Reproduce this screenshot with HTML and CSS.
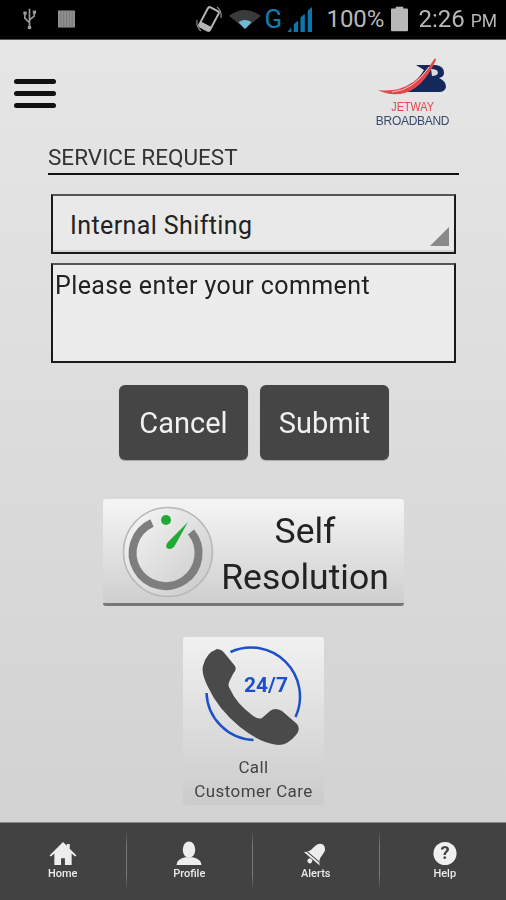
FILE: index.html
```html
<!DOCTYPE html>
<html lang="en">
<head>
<meta charset="utf-8">
<title>Service Request</title>
<link rel="stylesheet" href="styles.css">
</head>
<body>
<div class="screen">
  <div class="status">
    <div class="status-left">
      <svg class="ic-usb" viewBox="0 0 16 24"><path d="M8 1v20M8 16L3 11V7M8 13l5-4V6" fill="none" stroke="#9a9a9a" stroke-width="1.8"/><circle cx="8" cy="21" r="2" fill="#9a9a9a"/><rect x="1.5" y="4" width="3.5" height="3.5" fill="#9a9a9a"/><rect x="11.5" y="3" width="3.5" height="3.5" fill="#9a9a9a"/></svg>
      <svg class="ic-bars" viewBox="0 0 18 18"><rect width="18" height="18" fill="#8f8f8f"/><path d="M3 0v18M6 0v18M9 0v18M12 0v18M15 0v18" stroke="#777" stroke-width="1"/></svg>
    </div>
    <div class="status-right">
      <svg class="ic-rotate" viewBox="0 0 26 28"><g transform="rotate(28 13 14)"><rect x="7" y="3" width="12" height="22" rx="2" fill="none" stroke="#b5b5b5" stroke-width="2"/><rect x="7" y="20" width="12" height="5" fill="#b5b5b5"/></g><path d="M1 15Q0 22 5 26M25 13Q26 6 21 2" fill="none" stroke="#8a8a8a" stroke-width="1.200"/></svg>
      <svg class="ic-wifi" viewBox="0 0 34 20"><path d="M0 6Q17-6 34 6L17 20Z" fill="#3a3a3a"/><path d="M10 13Q17 8 24 13L17 20Z" fill="#6fb8d8"/></svg>
      <span class="net">G</span>
      <svg class="ic-signal" viewBox="0 0 26 26"><path d="M0 26L4 21V26Z" fill="#0b78ad"/><path d="M6.500 26V18L11 14V26Z" fill="#0b78ad"/><path d="M13.500 26V11L18 7V26Z" fill="#0b78ad"/><path d="M21 26V4L25.500 0V26Z" fill="#0b78ad"/></svg>
      <span class="pct">100%</span>
      <svg class="ic-batt" viewBox="0 0 18 26"><rect x="5" width="8" height="3" fill="#b8b8b8"/><rect y="2" width="18" height="24" rx="1" fill="#b8b8b8"/></svg>
      <span class="clock">2:26<small>PM</small></span>
    </div>
  </div>

  <main class="main">
    <header class="top">
      <div class="burger"><i></i><i></i><i></i></div>
      <div class="logo">
        <svg class="logo-mark" viewBox="0 0 74 42"><path d="M40 8H60Q68 9 68 16Q68 20 63 21Q70 24 70 30Q69 35 63 35H18Q38 30 48 13Z" fill="#14285c"/><path d="M55 12Q62 12 62 16Q61 19 56 19Z" fill="#dcdcdc"/><path d="M2 33Q36 38 59 1L60 3Q46 34 24 37Q10 38 2 33Z" fill="#e2474b"/><path d="M16 35Q38 33 53 10" fill="none" stroke="#f3c4c4" stroke-width="1"/></svg>
        <div class="logo-red">JETWAY</div>
        <div class="logo-blue">BROADBAND</div>
      </div>
    </header>

    <h1 class="title">SERVICE REQUEST</h1>

    <div class="field select">Internal Shifting<span class="caret"></span></div>
    <div class="field comment">Please enter your comment</div>

    <div class="actions">
      <button class="btn">Cancel</button>
      <button class="btn">Submit</button>
    </div>

    <div class="self">
      <svg class="gauge" viewBox="0 0 92 92">
        <defs><linearGradient id="g1" x1="0" y1="0" x2="1" y2="1"><stop offset="0" stop-color="#f8f8f8"/><stop offset="1" stop-color="#c8c8c8"/></linearGradient></defs>
        <circle cx="46" cy="46" r="44.500" fill="url(#g1)" stroke="#b8b8b8" stroke-width="1.500"/>
        <path d="M30 17A33 33 0 1 0 69 26" fill="none" stroke="#7e7e7e" stroke-width="8"/>
        <circle cx="44" cy="14" r="5" fill="#1faa35"/>
        <path d="M66 16L52 41Q47 45 44 41Q44 38 46 36Z" fill="#1faa35"/>
      </svg>
      <div class="self-label">Self<br>Resolution</div>
    </div>

    <div class="care">
      <svg class="phone" viewBox="0 0 106 106">
        <path d="M30.500 9A49 49 0 0 1 95.500 74M6.500 50A49 49 0 0 0 53.500 97" fill="none" stroke="#1c50c8" stroke-width="2.500"/>
        <path d="M17 6Q22 6 26 12L35 23Q37 27 33 31L30 37Q27 42 30 46Q36 60 52 72Q58 77 62 75L70 68Q75 64 82 68L97 81Q101 86 96 92Q88 102 78 102Q60 100 40 84Q18 66 8 44Q1 30 3 23Q6 10 17 6Z" fill="#4a4a4a"/>
        <text x="66" y="49" class="phone-txt" text-anchor="middle">24/7</text>
      </svg>
      <div class="care-label">Call<br>Customer Care</div>
    </div>
  </main>

  <nav class="tabs">
    <div class="tab">
      <svg class="tab-ic" viewBox="0 0 28 26"><path d="M14 1L0 15l1.500 1L5 13v12h7v-7h4v7h7V13l3.500 3 1.500-1L21 8V3h-3v2Z" fill="#ededed"/></svg>
      <span>Home</span>
    </div>
    <div class="tab">
      <svg class="tab-ic" viewBox="0 0 28 26"><ellipse cx="14" cy="9" rx="6.500" ry="8.500" fill="#ededed"/><path d="M1 25Q1 19 10 17H18Q27 19 27 25Z" fill="#ededed"/></svg>
      <span>Profile</span>
    </div>
    <div class="tab">
      <svg class="tab-ic" viewBox="0 0 28 26"><g transform="rotate(40 14 13)"><path d="M14 1Q20 2 20 10Q20 17 25 20H3Q8 17 8 10Q8 2 14 1Z" fill="#ededed"/><path d="M6 17.500H22" stroke="#424242" stroke-width="1"/><circle cx="14" cy="23" r="2.500" fill="#ededed"/></g></svg>
      <span>Alerts</span>
    </div>
    <div class="tab">
      <svg class="tab-ic" viewBox="0 0 28 26"><circle cx="14" cy="13" r="12" fill="#f0f0f0"/><text x="14" y="19" class="q" text-anchor="middle">?</text></svg>
      <span>Help</span>
    </div>
  </nav>
</div>
</body>
</html>
```

FILE: styles.css
```css
* { box-sizing: border-box; }
html, body { margin: 0; padding: 0; }
body { font-family: Roboto, "Liberation Sans", sans-serif; background: #000; }
.screen { width: 506px; height: 900px; display: flex; flex-direction: column; overflow: hidden; filter: blur(.5px); }

.status { height: 40px; flex: none; background: #000; border-bottom: 1px solid #555; display: flex; justify-content: space-between; align-items: center; padding: 0 9px 1px 22px; color: #b8b8b8; }
.status-left { display: flex; align-items: center; gap: 21px; }
.ic-usb { width: 15px; height: 24px; }
.ic-bars { width: 17px; height: 18px; }
.status-right { display: flex; align-items: center; }
.ic-rotate { width: 26px; height: 28px; margin-right: 7px; }
.ic-wifi { width: 32px; height: 19px; margin-right: 3px; }
.net { color: #0d7fb5; font-size: 26px; width: 20px; margin-right: 3px; }
.ic-signal { width: 26px; height: 25px; margin-right: 13px; }
.pct { font-size: 24px; width: 58px; margin-right: 7px; }
.ic-batt { width: 17px; height: 26px; margin-right: 10px; }
.clock { font-size: 24px; }
.clock small { font-size: 17.500px; margin-left: 6px; }

.main { flex: 1; background: linear-gradient(#e6e6e6, #d2d2d2); display: flex; flex-direction: column; align-items: flex-start; position: relative; }
.top { width: 100%; display: flex; justify-content: space-between; padding: 17px 56px 0 14px; height: 92px; }
.burger { width: 42px; height: 29px; margin-top: 22px; display: flex; flex-direction: column; justify-content: space-between; }
.burger i { display: block; height: 5px; background: #111; border-radius: 3px; }
.logo { width: 75px; display: flex; flex-direction: column; align-items: center; }
.logo-mark { width: 74px; height: 42px; display: block; }
.logo-red { font-family: "Liberation Sans", sans-serif; font-size: 12px; color: #e2474b; line-height: 14px; margin-top: 1px; transform: scaleX(.9); }
.logo-blue { font-family: "Liberation Sans", sans-serif; font-size: 12px; color: #3a4a6e; line-height: 14px; letter-spacing: -.3px; }

.title { width: 411px; margin: 12px 0 0 48px; height: 31px; border-bottom: 2px solid #111; font-size: 22.500px; font-weight: 400; color: #333; line-height: 25px; padding-top: 1px; }

.field { width: 405px; margin-left: 51px; border: 2px solid #1a1a1a; border-top-color: #555; background: #ececec; color: #222; font-size: 25px; letter-spacing: .4px; }
.select { height: 60px; margin-top: 19px; background: #e9e9e9; padding: 15px 0 0 17px; line-height: 30px; position: relative; box-shadow: inset 0 -6px 0 -4px #d4d4d4; }
.caret { position: absolute; right: 5px; bottom: 6px; width: 0; height: 0; border-style: solid; border-width: 0 0 19px 19px; border-color: transparent transparent #8a8a8a transparent; }
.comment { height: 100px; margin-top: 9px; padding: 5px 0 0 2px; line-height: 32px; }

.actions { align-self: stretch; display: flex; gap: 12px; margin: 22px 0 0 119px; }
.btn { width: 129px; height: 75px; border: none; border-radius: 6px; background: #454545; color: #f0f0f0; font: 400 29px Roboto, sans-serif; box-shadow: 0 1px 1px #aaa; padding: 0; }

.self { width: 301px; height: 107px; margin: 39px 0 0 103px; border-radius: 3px; background: linear-gradient(#f5f5f5, #cfcfcf); border-bottom: 3px solid #777; display: flex; align-items: center; padding-left: 19px; padding-bottom: 3px; }
.gauge { width: 92px; height: 92px; flex: none; margin-top: 4px; }
.self-label { flex: 1; text-align: center; font-size: 35.500px; line-height: 46px; color: #222; padding: 9px 8px 0 0; }

.care { width: 141px; height: 168px; margin: 31px 0 0 183px; border-radius: 3px; background: linear-gradient(#f1f1f1, #cbcbcb); display: flex; flex-direction: column; align-items: center; padding-top: 6px; }
.phone { width: 106px; height: 106px; flex: none; margin-left: -2px; }
.phone-txt { font: 700 21px Roboto, sans-serif; fill: #1c50c8; }
.care-label { font-size: 17px; line-height: 24px; color: #444; text-align: center; margin-top: 6px; letter-spacing: .4px; white-space: nowrap; }

.tabs { height: 78px; flex: none; background: #424242; border-top: 1px solid #888; display: flex; padding: 9px 0 0 0; }
.tab { width: 126.500px; height: 57px; display: flex; flex-direction: column; align-items: center; color: #ececec; font-size: 11px; font-weight: 500; border-right: 1px solid; border-image: linear-gradient(transparent, #7a7a7a 25%, #7a7a7a 75%, transparent) 1; }
.tab:last-child { border-right: none; padding-left: 4px; }
.tab-ic { width: 28px; height: 25px; margin-top: 9px; margin-bottom: 1px; }
.q { font: 700 19px Roboto, sans-serif; fill: #424242; }
```
